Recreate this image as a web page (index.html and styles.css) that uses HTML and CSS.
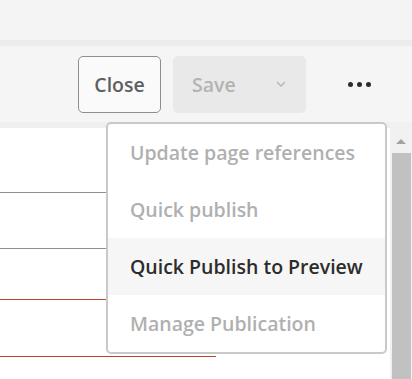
FILE: index.html
```html
<!DOCTYPE html>
<html lang="en">
<head>
  <meta charset="UTF-8" />
  <meta name="viewport" content="width=device-width, initial-scale=1.0"/>
  <title>Page Editor</title>
  <link rel="stylesheet" href="styles.css">
</head>
<body>
  <div class="top-bar"></div>
  <div class="top-sep"></div>

  <div class="toolbar">
    <button class="btn btn-close">Close</button>
    <button class="btn btn-save" disabled>
      Save
      <svg class="chevron" width="10" height="6" viewBox="0 0 10 6"><path d="M1 1 L5 5 L9 1" fill="none" stroke="#b5b5b5" stroke-width="1.3"/></svg>
    </button>
    <button class="btn-more" aria-label="More">
      <span class="dot"></span><span class="dot"></span><span class="dot"></span>
    </button>
  </div>

  <div class="content">
    <div class="fields">
      <div class="field"></div>
      <div class="field"></div>
      <div class="field field-error"></div>
      <div class="field field-error"></div>
    </div>

    <div class="scrollbar">
      <div class="scroll-arrow"></div>
      <div class="scroll-thumb"></div>
    </div>

    <ul class="menu">
      <li class="menu-item disabled">Update page references</li>
      <li class="menu-item disabled">Quick publish</li>
      <li class="menu-item active">Quick Publish to Preview</li>
      <li class="menu-item disabled">Manage Publication</li>
    </ul>
  </div>
</body>
</html>
```

FILE: styles.css
```css
body {
  margin: 0;
  width: 412px;
  height: 379px;
  overflow: hidden;
  font-family: "Open Sans", Arial, sans-serif;
  background: #fff;
}
.top-bar {
  height: 40px;
  background: #f4f4f4;
}
.top-sep {
  height: 6px;
  background: #ececec;
}
.toolbar {
  height: 76px;
  background: #f5f5f5;
  display: flex;
  align-items: center;
  justify-content: flex-end;
  padding-right: 12px;
}
.btn {
  height: 57px;
  font-family: inherit;
  font-size: 19.5px;
  font-weight: 600;
  border-radius: 5px;
  padding: 0;
}
.btn-close {
  width: 83px;
  background: #fafafa;
  border: 1px solid #8e8e8e;
  color: #5f5f5f;
}
.btn-save {
  width: 133px;
  margin-left: 12px;
  background: #e9e9e9;
  border: none;
  color: #b3b3b3;
  display: flex;
  align-items: center;
  justify-content: space-between;
  padding: 0 20px 0 19px;
}
.btn-more {
  width: 81px;
  height: 57px;
  margin-left: 13px;
  background: none;
  border: none;
  display: flex;
  align-items: center;
  justify-content: center;
  gap: 4px;
  padding: 0;
}
.dot {
  width: 5px;
  height: 5px;
  border-radius: 50%;
  background: #2c2c2c;
}
.content {
  position: relative;
  height: 257px;
  border-top: 6px solid #efefef;
}
.fields {
  width: 216px;
}
.field {
  height: 56px;
  border-bottom: 1px solid #8f8f8f;
}
.field:first-child {
  height: 64px;
}
.field:nth-child(2) {
  height: 55px;
}
.field:nth-child(3) {
  height: 50px;
}
.field-error {
  border-bottom-color: #c0432f;
}
.scrollbar {
  position: absolute;
  top: -6px;
  right: 0;
  width: 22px;
  height: 263px;
  background: #f1f1f1;
}
.scroll-arrow {
  margin: 17px auto 0;
  width: 0;
  height: 0;
  border-left: 5px solid transparent;
  border-right: 5px solid transparent;
  border-bottom: 5px solid #a3a3a3;
}
.scroll-thumb {
  margin: 9px 1px 0 2px;
  height: 240px;
  background: #c1c1c1;
}
.menu {
  position: absolute;
  top: -6px;
  left: 106px;
  width: 277px;
  margin: 0;
  padding: 0;
  list-style: none;
  background: #fff;
  border: 2px solid #c9c9c9;
  border-radius: 5px;
}
.menu-item {
  height: 57px;
  line-height: 57px;
  padding-left: 22px;
  font-size: 19.5px;
  font-weight: 600;
  white-space: nowrap;
}
.disabled {
  color: #b0b0b0;
}
.active {
  color: #2c2c2c;
  background: #f6f6f6;
}
```
